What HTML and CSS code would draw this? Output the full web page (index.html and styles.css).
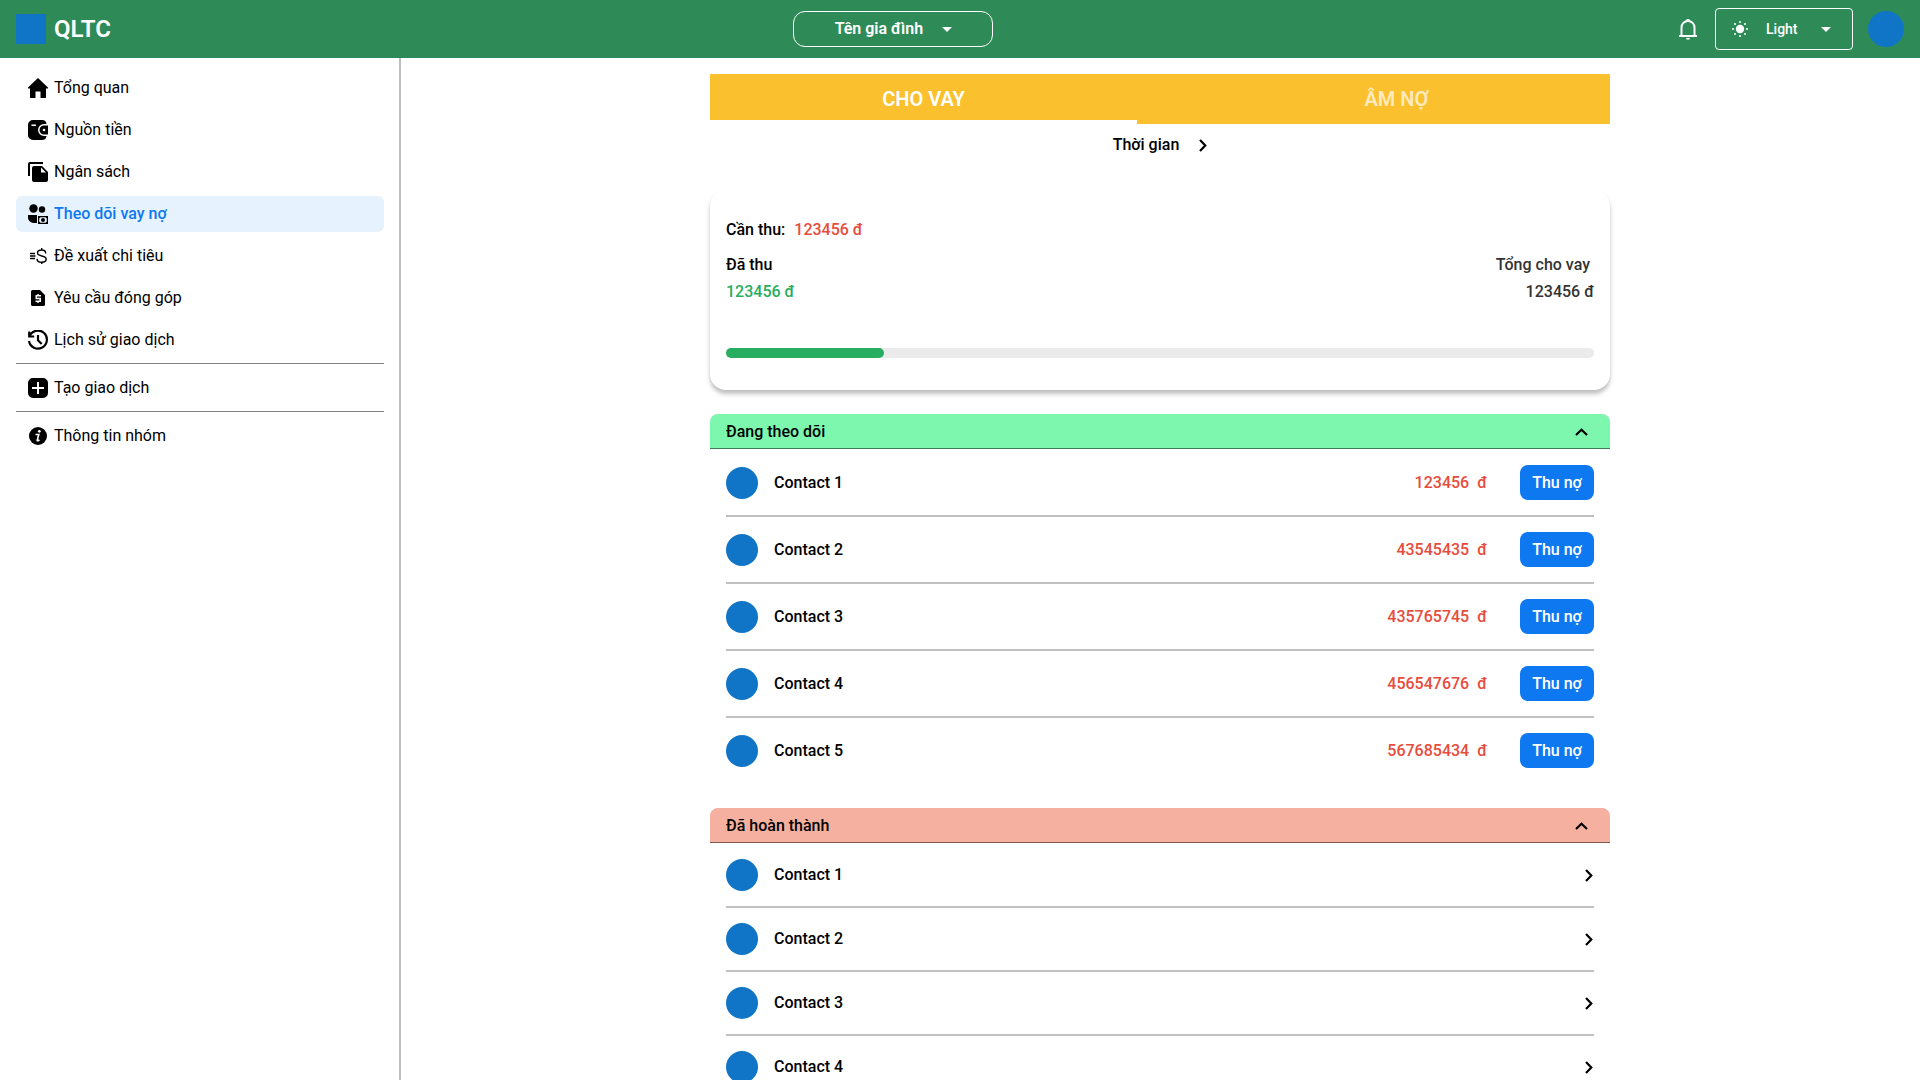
FILE: index.html
```html
<!DOCTYPE html>
<html lang="vi">
<head>
<meta charset="utf-8">
<meta name="viewport" content="width=device-width, initial-scale=1">
<title>QLTC</title>
<link rel="stylesheet" href="styles.css">
</head>
<body>
<svg class="sprite" aria-hidden="true">
  <symbol id="chevron-right" viewBox="0 0 8 13"><path d="M1 1l5.300 5.500L1 12" fill="none" stroke="currentColor" stroke-width="2.200"/></symbol>
  <symbol id="chevron-up" viewBox="0 0 13 8"><path d="M1 7l5.500-5.300L12 7" fill="none" stroke="currentColor" stroke-width="2.200"/></symbol>
  <symbol id="caret" viewBox="0 0 10 5"><path d="M0 0h10L5 5z" fill="currentColor"/></symbol>
</svg>
<header class="topbar">
  <a class="brand" href="#"><span class="logo"></span>QLTC</a>
  <button class="family" type="button">Tên gia đình<svg class="caret"><use href="#caret"/></svg></button>
  <div class="tools">
    <button class="bell" type="button" aria-label="Thông báo">
      <svg width="24" height="24" viewBox="0 0 24 24" fill="none" stroke="currentColor" stroke-width="2"><path d="M3 19h18M5.500 19v-8.500a6.500 6.500 0 0 1 13 0V19"/><path d="M10 4a2 2 0 0 1 4 0zM10 21h4a2 1.800 0 0 1-4 0z" fill="currentColor" stroke-width="0"/></svg>
    </button>
    <button class="theme" type="button">
      <svg width="16" height="16" viewBox="0 0 16 16" fill="currentColor"><circle cx="8" cy="8" r="4.200"/><circle cx="8" cy="1" r="1"/><circle cx="8" cy="15" r="1"/><circle cx="1" cy="8" r="1"/><circle cx="15" cy="8" r="1"/><circle cx="3" cy="3" r="1"/><circle cx="13" cy="3" r="1"/><circle cx="3" cy="13" r="1"/><circle cx="13" cy="13" r="1"/></svg>
      <span class="theme-name">Light</span>
      <svg class="caret"><use href="#caret"/></svg>
    </button>
    <a class="profile" href="#" aria-label="Tài khoản"></a>
  </div>
</header>
<div class="shell">
  <nav class="sidebar">
    <a class="nav-item" href="#"><svg class="icon" viewBox="0 0 20 20"><path d="M10 0L0 9.500V10.500h2V20h5.500v-6.500h5V20H18v-9.500h2V9.500z"/></svg>Tổng quan</a>
    <a class="nav-item" href="#"><svg class="icon" viewBox="0 0 20 20"><path fill-rule="evenodd" d="M5 0h9a4.500 4.500 0 0 1 4.500 4H16a6 6 0 0 0 0 12h2.500A4.500 4.500 0 0 1 14 20H5a5 5 0 0 1-5-5V5a5 5 0 0 1 5-5zM3.500 4.500V6H8V4.500z"/><path fill-rule="evenodd" d="M16 5.500h4v9h-4a4.500 4.500 0 0 1 0-9zm0 3.200a1.300 1.300 0 1 0 0 2.600 1.300 1.300 0 0 0 0-2.600z"/></svg>Nguồn tiền</a>
    <a class="nav-item" href="#"><svg class="icon" viewBox="0 0 20 20"><path d="M0 14V2a2 2 0 0 1 2-2h13v2H2v12z"/><path fill-rule="evenodd" d="M6 4h8l6 6v8a2 2 0 0 1-2 2H6a2 2 0 0 1-2-2V6a2 2 0 0 1 2-2zm7 1.500V10.500h5z"/></svg>Ngân sách</a>
    <a class="nav-item active" href="#" aria-current="page"><svg class="icon" viewBox="0 0 20 20"><circle cx="5.500" cy="4.500" r="4.200"/><circle cx="14" cy="5.500" r="3.200"/><path d="M0 11h9v8H7C3 19 0 17 0 13.500z"/><path fill-rule="evenodd" d="M10 12h10v8H10zm2.500 1.200l-1.300 1.300v3l1.300 1.300h5l1.300-1.300v-3l-1.300-1.300z"/><circle cx="15" cy="16" r="2"/></svg>Theo dõi vay nợ</a>
    <a class="nav-item" href="#"><svg class="icon" viewBox="0 0 20 20"><path d="M2 7.500h5M2 10h5.500M2 12.500h5M17.700 7.500C17.700 5 16 4 13.700 4 11 4 9.500 5.200 9.500 7c0 4 8.700 2 8.700 6 0 2-1.900 3.200-4.500 3.200S9 15 9 12.700M13.700 2v2m0 12v2" fill="none" stroke="currentColor" stroke-width="1.400"/></svg>Đề xuất chi tiêu</a>
    <a class="nav-item" href="#"><svg class="icon" viewBox="0 0 20 20"><path fill-rule="evenodd" d="M4.500 2H12l5 5v9.500A1.500 1.500 0 0 1 15.500 18h-11A1.500 1.500 0 0 1 3 16.500v-13A1.500 1.500 0 0 1 4.500 2zM9.300 6v1H7.500v4.300h4v1.200h-4V14h1.800v1h1.400v-1H13V9.800H9V8.500h4V7h-2.300V6z"/></svg>Yêu cầu đóng góp</a>
    <a class="nav-item" href="#"><svg class="icon" viewBox="0 0 20 20" fill="none" stroke="currentColor" stroke-width="2.200"><path d="M1.200 1.500v5h5M1.500 6.300A9 9 0 1 1 1 11M10 5v5.300l3.700 3.700"/></svg>Lịch sử giao dịch</a>
    <hr class="rule">
    <a class="nav-item" href="#"><svg class="icon" viewBox="0 0 20 20"><path fill-rule="evenodd" d="M5 0h10a5 5 0 0 1 5 5v10a5 5 0 0 1-5 5H5a5 5 0 0 1-5-5V5a5 5 0 0 1 5-5zm4 4v5H4v2h5v5h2v-5h5V9h-5V4z"/></svg>Tạo giao dịch</a>
    <hr class="rule">
    <a class="nav-item" href="#"><svg class="icon" viewBox="0 0 20 20"><circle cx="10" cy="10" r="9"/><circle cx="11.300" cy="5.300" r="1.400" fill="#fff"/><path d="M7.500 8.500h3.300L9.200 14.300c0 .8.900.4 2.300-.5" fill="none" stroke="#fff" stroke-width="1.600"/></svg>Thông tin nhóm</a>
  </nav>
  <main class="main">
    <div class="content">
      <div class="tabs" role="tablist">
        <button class="tab selected" type="button" role="tab" aria-selected="true">CHO VAY</button>
        <button class="tab" type="button" role="tab" aria-selected="false">ÂM NỢ</button>
      </div>
      <button class="period" type="button">Thời gian<svg class="right"><use href="#chevron-right"/></svg></button>
      <section class="summary">
        <p class="due">Cần thu: <span class="red">123456 đ</span></p>
        <div class="totals">
          <div class="total"><span>Đã thu</span><span class="green">123456 đ</span></div>
          <div class="total end"><span class="caption">Tổng cho vay</span><span>123456 đ</span></div>
        </div>
        <div class="track"><div class="fill" style="width:18.200%"></div></div>
      </section>
      <section class="group">
        <button class="group-head open" type="button" aria-expanded="true">Đang theo dõi<svg class="up"><use href="#chevron-up"/></svg></button>
        <ul class="list">
          <li class="row"><span class="avatar"></span><span class="name">Contact 1</span><span class="amount">123456<span>đ</span></span><button class="collect" type="button">Thu nợ</button></li>
          <li class="row"><span class="avatar"></span><span class="name">Contact 2</span><span class="amount">43545435<span>đ</span></span><button class="collect" type="button">Thu nợ</button></li>
          <li class="row"><span class="avatar"></span><span class="name">Contact 3</span><span class="amount">435765745<span>đ</span></span><button class="collect" type="button">Thu nợ</button></li>
          <li class="row"><span class="avatar"></span><span class="name">Contact 4</span><span class="amount">456547676<span>đ</span></span><button class="collect" type="button">Thu nợ</button></li>
          <li class="row"><span class="avatar"></span><span class="name">Contact 5</span><span class="amount">567685434<span>đ</span></span><button class="collect" type="button">Thu nợ</button></li>
        </ul>
      </section>
      <section class="group">
        <button class="group-head done" type="button" aria-expanded="true">Đã hoàn thành<svg class="up"><use href="#chevron-up"/></svg></button>
        <ul class="list">
          <li><a class="row" href="#"><span class="avatar"></span><span class="name">Contact 1</span><svg class="right"><use href="#chevron-right"/></svg></a></li>
          <li><a class="row" href="#"><span class="avatar"></span><span class="name">Contact 2</span><svg class="right"><use href="#chevron-right"/></svg></a></li>
          <li><a class="row" href="#"><span class="avatar"></span><span class="name">Contact 3</span><svg class="right"><use href="#chevron-right"/></svg></a></li>
          <li><a class="row" href="#"><span class="avatar"></span><span class="name">Contact 4</span><svg class="right"><use href="#chevron-right"/></svg></a></li>
        </ul>
      </section>
    </div>
  </main>
</div>
</body>
</html>
```
FILE: styles.css
```css
* { box-sizing: border-box; }
body {
  margin: 0;
  height: 100vh;
  display: flex;
  flex-direction: column;
  font: 400 16px/20px Roboto, sans-serif;
  color: #000;
  background: #fff;
}
button { font: inherit; color: inherit; background: none; border: 0; padding: 0; cursor: pointer; }
a { color: inherit; text-decoration: none; }
svg { display: block; flex: none; }
.sprite { display: none; }

.topbar {
  flex: none;
  height: 58px;
  padding: 0 16px;
  display: flex;
  justify-content: space-between;
  align-items: center;
  background: #2e8b57;
  color: #fff;
}
.brand { display: flex; align-items: center; gap: 8px; font-size: 24px; font-weight: 600; }
.logo { width: 30px; height: 30px; background: #1175c7; }
.family {
  width: 200px;
  height: 36px;
  display: flex;
  align-items: center;
  justify-content: center;
  gap: 19px;
  border: 1px solid #fff;
  border-radius: 12px;
  font-weight: 600;
}
.caret { width: 10px; height: 5px; }
.tools { display: flex; justify-content: flex-end; align-items: center; }
.bell { margin-right: 15px; }
.theme {
  width: 138px;
  height: 42px;
  margin-right: 15px;
  padding: 0 21px 0 16px;
  display: flex;
  align-items: center;
  border: 1px solid #fff;
  border-radius: 4px;
  font-size: 14px;
  font-weight: 500;
}
.theme-name { margin: 0 auto 0 18px; }
.profile { width: 36px; height: 36px; border-radius: 50%; background: #1175c7; }

.shell { flex: 1; min-height: 0; display: flex; }
.sidebar { flex: none; width: 401px; padding: 12px 15px 12px 16px; border-right: 2px solid #c0c0c0; }
.nav-item {
  height: 36px;
  margin-bottom: 6px;
  padding: 0 12px;
  display: flex;
  align-items: center;
  gap: 6px;
  border-radius: 6px;
}
.icon { width: 20px; height: 20px; fill: currentColor; color: #000; }
.icon[fill="none"] { fill: none; }
.active { background: #e7f2ff; color: #0d78f0; font-weight: 500; }
.rule { height: 1px; margin: -1px 0 6px; border: 0; background: #808080; }

.main { flex: 1; padding-right: 1px; overflow-y: auto; scrollbar-width: none; }
.content { max-width: 900px; margin: 0 auto; padding-top: 16px; font-weight: 500; }
.tabs {
  height: 50px;
  display: flex;
  gap: 46px;
  background: linear-gradient(#fff, #fff) left bottom / 427px 4px no-repeat #fbc02d;
}
.tab { flex: 1; color: rgba(255, 255, 255, .7); font-size: 20px; font-weight: 600; }
.selected { color: #fff; }
.period { margin: 10px auto 0; padding-top: 1px; display: flex; align-items: center; gap: 20px; }
.right { width: 8px; height: 13px; }
.up { width: 13px; height: 8px; }

.summary {
  margin-top: 35px;
  padding: 30px 16px 32px;
  border-radius: 16px;
  box-shadow: 0 4px 4px rgba(0, 0, 0, .25);
}
.due { margin: 0; display: flex; gap: 9px; }
.red { color: #e74c3c; }
.green { color: #27ae60; }
.totals { margin-top: 15px; display: flex; justify-content: space-between; }
.total { display: flex; flex-direction: column; gap: 7px; }
.end { align-items: flex-end; color: #333; }
.caption { padding-right: 4px; }
.track { height: 10px; margin-top: 46px; border-radius: 5px; background: #ebebeb; }
.fill { height: 100%; border-radius: 5px; background: #27ae60; }

.group { margin-top: 24px; }
.group + .group { margin-top: 25px; }
.group-head {
  width: 100%;
  height: 35px;
  padding: 1px 22px 0 16px;
  display: flex;
  align-items: center;
  justify-content: space-between;
  border-bottom: 1px solid rgba(0, 0, 0, .5);
  border-radius: 8px 8px 0 0;
}
.open { background: #7ef7ae; }
.done { background: #f5b0a0; }
.list { list-style: none; margin: 0; padding: 1px 16px 0; }
.row { padding: 15px 0; display: flex; align-items: center; border-bottom: 2px solid #c0c0c0; }
li.row:last-child { border-bottom: 0; }
.avatar { width: 32px; height: 32px; margin-right: 16px; border-radius: 50%; background: #1175c7; }
.name { flex: 1; }
.row .right { margin-right: 1px; }
.amount { display: flex; gap: 8px; margin-right: 33px; color: #e74c3c; }
.collect { width: 74px; height: 35px; border-radius: 8px; background: #0d78f0; color: #fff; }
```
